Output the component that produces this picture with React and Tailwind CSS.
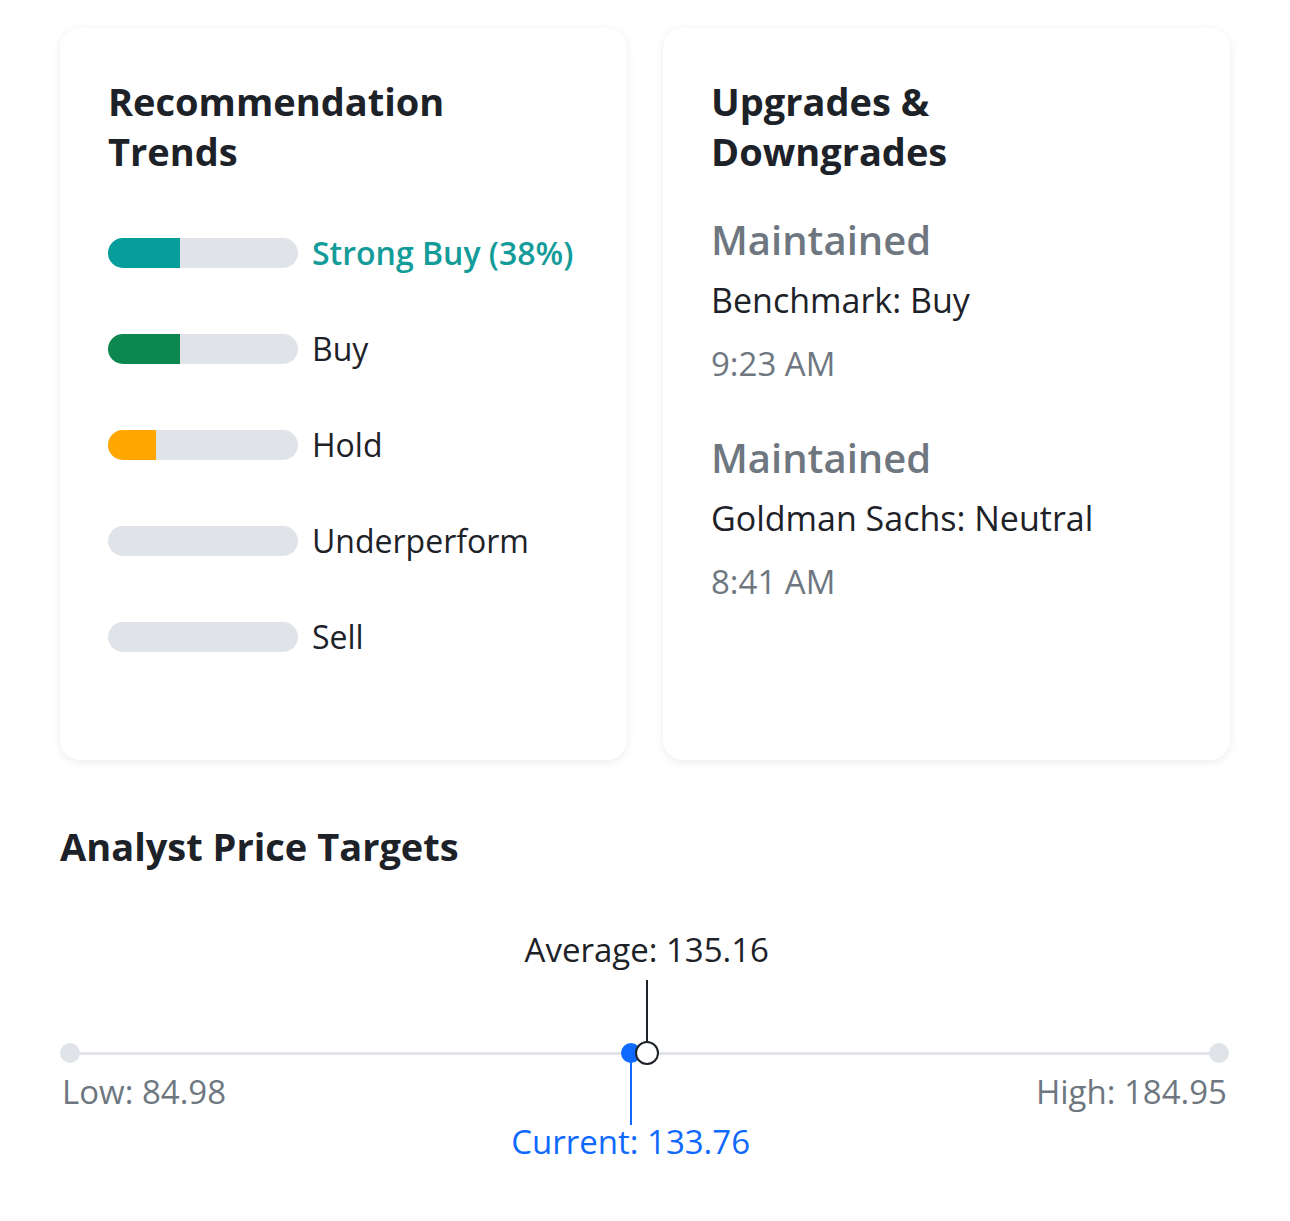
import React from 'react';

const trends = [
  { label: 'Strong Buy (38%)', pct: 38, color: 'bg-[#069e9b]', text: 'text-[#139c99] font-semibold' },
  { label: 'Buy', pct: 38, color: 'bg-[#0d8750]', text: 'text-[#1d2228]' },
  { label: 'Hold', pct: 25, color: 'bg-[#ffa700]', text: 'text-[#1d2228]' },
  { label: 'Underperform', pct: 0, color: 'bg-[#ff7b12]', text: 'text-[#1d2228]' },
  { label: 'Sell', pct: 0, color: 'bg-[#eb0f29]', text: 'text-[#1d2228]' },
];

const changes = [
  { action: 'Maintained', firm: 'Benchmark: Buy', time: '9:23 AM' },
  { action: 'Maintained', firm: 'Goldman Sachs: Neutral', time: '8:41 AM' },
];

const low = 84.98;
const high = 184.95;
const current = 133.76;
const average = 135.16;
const pos = (v) => `${((v - low) / (high - low)) * 100}%`;

function Card({ title, children }) {
  return (
    <div className="flex h-[732px] flex-col rounded-[20px] bg-white px-[48px] pt-[48px] shadow-[0_2px_10px_rgba(0,0,0,0.08)]">
      <h2 className="text-[38px] font-bold leading-[50px]">{title}</h2>
      {children}
    </div>
  );
}

export default function App() {
  return (
    <div className="min-h-[1221px] bg-white px-[60px] pt-[28px] font-['Open_Sans',sans-serif] text-[#1d2228]">
      <div className="grid grid-cols-2 gap-[36px]">
        <Card title={<>Recommendation<br />Trends</>}>
          <div className="mt-[61px] flex flex-col gap-[65px]">
            {trends.map((t) => (
              <div key={t.label} className="flex h-[31px] items-center gap-[14px]">
                <div className="h-[30px] w-[190px] overflow-hidden rounded-full bg-[#e0e4e9]">
                  <div className={`h-full ${t.color}`} style={{ width: `${t.pct}%` }} />
                </div>
                <span className={`text-[32px] leading-none ${t.text}`}>{t.label}</span>
              </div>
            ))}
          </div>
        </Card>
        <Card title={<>Upgrades &amp;<br />Downgrades</>}>
          <div className="mt-[36px] flex flex-col gap-[38px]">
            {changes.map((c, i) => (
              <div key={i} className="flex flex-col">
                <div className="text-[40px] font-semibold leading-[56px] text-[#6e7780]">{c.action}</div>
                <div className="mt-[4px] text-[34px] leading-[56px]">{c.firm}</div>
                <div className="mt-[8px] text-[33px] leading-[56px] text-[#6e7780]">{c.time}</div>
              </div>
            ))}
          </div>
        </Card>
      </div>

      <h2 className="mt-[61px] text-[38px] font-bold leading-[50px]">Analyst Price Targets</h2>

      <div className="relative mt-[57px] h-[260px] pt-[142px]">
        <div className="absolute left-[10px] right-[11px] top-[124px] h-[3px] bg-[#e0e4e9]" />
        <div className="absolute left-0 top-[115px] h-[20px] w-[20px] rounded-full bg-[#e0e4e9]" />
        <div className="absolute right-[1px] top-[115px] h-[20px] w-[20px] rounded-full bg-[#e0e4e9]" />
        <div className="absolute inset-y-0 left-[10px] right-[11px]">
          <div className="absolute top-0 -translate-x-1/2 whitespace-nowrap text-[33px] leading-[44px]" style={{ left: pos(average) }}>
            Average: 135.16
          </div>
          <div className="absolute top-[52px] h-[64px] w-[2px] -translate-x-1/2 bg-[#1d2228]" style={{ left: pos(average) }} />
          <div className="absolute top-[125px] h-[72px] w-[2px] -translate-x-1/2 bg-[#0f69ff]" style={{ left: pos(current) }} />
          <div className="absolute top-[115px] h-[20px] w-[20px] -translate-x-1/2 rounded-full bg-[#0f69ff]" style={{ left: pos(current) }} />
          <div className="absolute top-[113px] h-[24px] w-[24px] -translate-x-1/2 rounded-full border-[2px] border-[#1d2228] bg-white" style={{ left: pos(average) }} />
          <div className="absolute top-[192px] -translate-x-1/2 whitespace-nowrap text-[33px] leading-[44px] text-[#0f69ff]" style={{ left: pos(current) }}>
            Current: 133.76
          </div>
        </div>
        <div className="flex justify-between pl-[2px] pr-[3px] text-[33px] leading-[44px] text-[#6e7780]">
          <span>Low: 84.98</span>
          <span>High: 184.95</span>
        </div>
      </div>
    </div>
  );
}
